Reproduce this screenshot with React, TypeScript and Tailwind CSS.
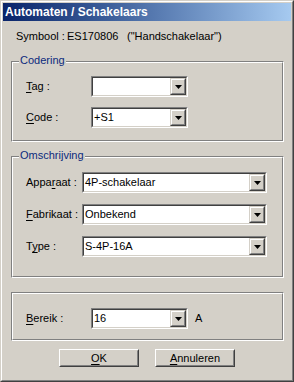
import React from "react";

const font = "font-['Liberation_Sans',Arial,sans-serif] text-[11px] leading-[13px]";

function Arrow() {
  return (
    <svg width="7" height="4" viewBox="0 0 7 4" aria-hidden>
      <polygon points="0,0 7,0 3.5,4" fill="#000" />
    </svg>
  );
}

function Combo({ value, width }: { value: string; width: string }) {
  return (
    <div
      className={`flex h-[21px] border border-t-[#808080] border-l-[#808080] border-r-white border-b-white ${width}`}
    >
      <div className="flex flex-1 border border-t-[#404040] border-l-[#404040] border-r-[#D4D0C8] border-b-[#D4D0C8] bg-white">
        <span className="flex-1 pl-[1px] pt-[2px] text-black">{value}</span>
        <div className="flex w-[16px] border border-t-[#D4D0C8] border-l-[#D4D0C8] border-r-[#404040] border-b-[#404040]">
          <div className="flex flex-1 items-center justify-center border border-t-white border-l-white border-r-[#808080] border-b-[#808080] bg-[#D4D0C8]">
            <Arrow />
          </div>
        </div>
      </div>
    </div>
  );
}

function Label({ pre, u, post, width }: { pre: string; u: string; post: string; width: string }) {
  return (
    <span className={`shrink-0 text-black ${width}`}>
      {pre}
      <span className="underline underline-offset-2">{u}</span>
      {post}
    </span>
  );
}

function Group({
  legend,
  className,
  children,
}: {
  legend?: string;
  className: string;
  children: React.ReactNode;
}) {
  return (
    <div className="relative ml-[8px] w-[273px] border border-t-[#808080] border-l-[#808080] border-r-white border-b-white">
      {legend && (
        <span className="absolute left-[7px] top-[-8px] bg-[#D4D0C8] px-[1px] text-[#0c2a7d]">{legend}</span>
      )}
      <div
        className={`flex flex-col border border-t-white border-l-white border-r-[#808080] border-b-[#808080] pl-[13px] ${className}`}
      >
        {children}
      </div>
    </div>
  );
}

function Button({ pre, u, post }: { pre: string; u: string; post: string }) {
  return (
    <div className="flex h-[18px] w-[80px] border border-t-white border-l-white border-r-[#404040] border-b-[#404040]">
      <div className="flex flex-1 items-center justify-center border border-t-[#D4D0C8] border-l-[#D4D0C8] border-r-[#808080] border-b-[#808080] text-black">
        <span>
          {pre}
          <span className="underline underline-offset-2">{u}</span>
          {post}
        </span>
      </div>
    </div>
  );
}

export default function App() {
  return (
    <div className={`h-[382px] w-[294px] ${font}`}>
      <div className="flex h-full flex-col border border-t-[#D4D0C8] border-l-[#D4D0C8] border-r-[#404040] border-b-[#404040]">
        <div className="flex h-full flex-col border border-t-white border-l-white border-r-[#808080] border-b-[#808080] bg-[#D4D0C8] p-[1px]">
          <div className="flex h-[18px] shrink-0 items-center bg-gradient-to-r from-[#0A246A] to-[#A6CAF0] pl-[2px] text-[12px] font-bold text-white">
            Automaten / Schakelaars
          </div>

          <div className="flex flex-1 flex-col">
            <div className="mt-[9px] flex pl-[13px] text-black">
              <span className="w-[51px]">Symbool :</span>
              <span className="w-[60px]">ES170806</span>
              <span>("Handschakelaar")</span>
            </div>

            <div className="mt-[18px]">
              <Group legend="Codering" className="gap-[10px] pb-[12px] pt-[13px]">
                <div className="flex items-center">
                  <Label pre="" u="T" post="ag :" width="w-[65px]" />
                  <Combo value="" width="w-[97px]" />
                </div>
                <div className="flex items-center">
                  <Label pre="" u="C" post="ode :" width="w-[65px]" />
                  <Combo value="+S1" width="w-[97px]" />
                </div>
              </Group>
            </div>

            <div className="mt-[14px]">
              <Group legend="Omschrijving" className="gap-[11px] pb-[19px] pt-[14px]">
                <div className="flex items-center">
                  <Label pre="Appa" u="r" post="aat :" width="w-[56px]" />
                  <Combo value="4P-schakelaar" width="w-[185px]" />
                </div>
                <div className="flex items-center">
                  <Label pre="" u="F" post="abrikaat :" width="w-[56px]" />
                  <Combo value="Onbekend" width="w-[185px]" />
                </div>
                <div className="flex items-center">
                  <Label pre="T" u="y" post="pe :" width="w-[56px]" />
                  <Combo value="S-4P-16A" width="w-[185px]" />
                </div>
              </Group>
            </div>

            <div className="mt-[14px]">
              <Group className="pb-[10px] pt-[14px]">
                <div className="flex items-center">
                  <Label pre="" u="B" post="ereik :" width="w-[65px]" />
                  <Combo value="16" width="w-[97px]" />
                  <span className="ml-[7px] text-black">A</span>
                </div>
              </Group>
            </div>

            <div className="mt-[8px] flex justify-center gap-[16px]">
              <Button pre="" u="O" post="K" />
              <Button pre="" u="A" post="nnuleren" />
            </div>
          </div>
        </div>
      </div>
    </div>
  );
}
